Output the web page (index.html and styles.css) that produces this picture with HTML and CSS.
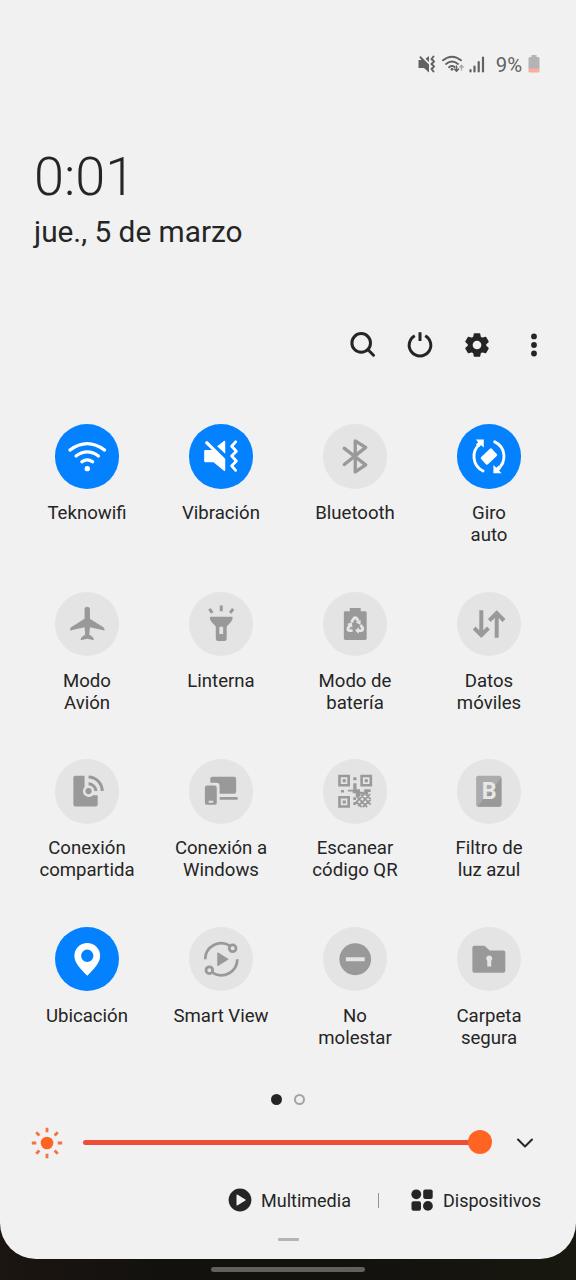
FILE: index.html
```html
<!DOCTYPE html>
<html lang="es">
<head>
<meta charset="utf-8">
<title>Ajustes rápidos</title>
<link rel="stylesheet" href="styles.css">
</head>
<body>
<main class="panel">
  <div class="status">
    <svg class="status-mute" width="18" height="18" viewBox="0 0 18 18"><path class="fill" d="M.5 5h3L1.300 2.300l1.200-1.200L11 9.500V17.500l-5-4.500H.5zM11 1v6L7.500 3.800z"/><path class="line" stroke-width="2" d="M15.500 1.500L13.500 4l2.500 2.500L13.500 9l2.500 2.500-2.500 2.500 2 2.500"/></svg>
    <svg class="status-wifi" width="23" height="18" viewBox="0 0 23 18"><path class="line" stroke-width="1.900" d="M1 5.300Q10-2 19 5.300M4 9Q10 4 16 9M7 12.200Q10 9.800 12.600 12"/><circle class="fill" cx="10" cy="14.300" r="1.400"/><path class="line" stroke-width="1.500" d="M14.500 11v5M12.500 14l2 2.200 2-2.200"/><path class="line faint" stroke-width="1.300" d="M19.500 15v-4.500M17.800 12.200l1.700-1.900 1.700 1.900"/></svg>
    <svg class="status-signal" width="16" height="17" viewBox="0 0 16 17"><path class="line" stroke-width="2.200" d="M1.500 14v1.500M5.500 10.500v5M9.700 6v9.500M14 1.500v14"/></svg>
    <span class="percent">9%</span>
    <svg class="status-battery" width="12" height="18" viewBox="0 0 12 18"><path fill="#b4b4b4" d="M3.500 0h5v2H10q1.500 0 1.500 1.500V14H.5V3.500Q.5 2 2 2h1.500z"/><path fill="#f7ae9b" d="M.5 13.500h11v3q0 1-1 1h-9q-1 0-1-1z"/></svg>
  </div>

  <header class="clock">
    <div class="time">0:01</div>
    <div class="date">jue., 5 de marzo</div>
  </header>

  <nav class="actions">
    <svg width="28" height="28" viewBox="0 0 28 28"><g class="line" stroke-width="3"><circle cx="12.200" cy="11.900" r="9.300"/><path d="M18.800 18.500l5.700 5.700"/></g></svg>
    <svg width="28" height="28" viewBox="0 0 28 28"><path class="line sharp" stroke-width="3" d="M8.800 4.700a10.800 10.800 0 1 0 10.400 0M14 1.300V10"/></svg>
    <svg width="28" height="28" viewBox="0 0 28 28"><path class="fill line" stroke-width="1.500" fill-rule="evenodd" d="M11.500 3h5l.7 3.300 2 1.200 3.300-1.100 2.500 4.200-2.500 2.300v2.200l2.500 2.300-2.500 4.200-3.300-1.100-2 1.200-.7 3.300h-5l-.7-3.300-2-1.200-3.300 1.100L3 17.400l2.500-2.300v-2.200L3 10.600l2.500-4.200 3.300 1.100 2-1.200zM14 8.900a5.100 5.100 0 1 0 0 10.200 5.100 5.100 0 0 0 0-10.200z"/></svg>
    <svg width="28" height="28" viewBox="0 0 28 28"><g class="fill"><circle cx="14" cy="5.400" r="2.900"/><circle cx="14" cy="14" r="2.900"/><circle cx="14" cy="22.500" r="2.900"/></g></svg>
  </nav>

  <section class="tiles">
    <div class="tile on"><svg class="disc" viewBox="0 0 65 65"><path class="line" stroke-width="3.200" d="M15 26.300Q32.500 13.500 50 26.300M21.200 32.300Q32.500 24 43.800 32.300M27 38.200Q32.500 34.300 38 38.200"/><circle class="fill" cx="32.500" cy="45" r="2.700"/></svg><span>Teknowifi</span></div>
    <div class="tile on"><svg class="disc" viewBox="0 0 65 65"><path class="fill" d="M16.500 26.300h6.700l-6.700-6.500q-.7-1.300.4-2.200t2.100 0L36.500 35v11.500q0 1.500-1.300.6L24.700 38.500h-8.200q-1.200 0-1.200-1.200v-9.800q0-1.200 1.200-1.200zM36.500 18v12L28.300 22.500l6.900-5.400q1.300-.7 1.300.9z"/><path class="line" stroke-width="2.900" d="M47 18l-4 4.500 4.700 4.900-4.700 4.900 4.700 4.900-4.700 5 4 4.500"/></svg><span>Vibración</span></div>
    <div class="tile"><svg class="disc" viewBox="0 0 65 65"><path class="line" stroke-width="3.400" d="M21.500 24.500L43 41.200 32.500 48.300V17L43 23.500 21.500 40.800"/></svg><span>Bluetooth</span></div>
    <div class="tile on"><svg class="disc" viewBox="0 0 65 65"><rect class="fill" x="24.700" y="27.800" width="15" height="10" rx="1.500" transform="rotate(-43 32.200 32.800)"/><path class="line" stroke-width="2.900" d="M26.300 47.300A16 16 0 0 1 23.500 20M38 18a16 16 0 0 1 2.600 27.600"/><path class="fill" d="M19 15.500h8v8.300l-2.900-2.700-2.400 2.200-2.600-2.600 2.200-2.300zM45 49.600h-8.300v-8.200l2.900 2.700 2.400-2.200 2.600 2.600-2.200 2.400z"/></svg><span>Giro<br>auto</span></div>

    <div class="tile"><svg class="disc" viewBox="0 0 65 65"><path class="fill" d="M29.800 17.800q0-2.900 2.700-2.900t2.700 2.900V27l13.600 8.500q1.200.8 1.200 3.200l-14.800-3.300-.6 7.500 3.300 2.500q1.300 1 1.300 3.100l-6.700-1.500-6.700 1.500q0-2.100 1.300-3.100l3.300-2.500-.6-7.500L15 38.700q0-2.400 1.200-3.200L29.800 27z"/></svg><span>Modo<br>Avión</span></div>
    <div class="tile"><svg class="disc" viewBox="0 0 65 65"><path class="fill" fill-rule="evenodd" d="M21.700 25h21.600q.7 0 .7.800 0 3.200-2 4.700l-4 4.300v12.400q0 2.300-2.300 2.300h-6.400q-2.300 0-2.300-2.300V34.800l-4-4.300q-2-1.500-2-4.700 0-.8.700-.8zM30.600 35v7.300h3.800V35z"/><path class="line sharp" stroke-width="3" d="M32.500 13.500v6M20.500 17l3 4M44.500 17l-3 4"/></svg><span>Linterna</span></div>
    <div class="tile"><svg class="disc" viewBox="0 0 65 65"><path class="fill" d="M27 16h11v3.300h4.500q1.500 0 1.500 1.500v26q0 1.500-1.500 1.500h-20q-1.500 0-1.500-1.500v-26q0-1.500 1.500-1.500H27z"/><g class="cutline" stroke-width="2.900"><path d="M28.700 30.400l2.200-3.600q1.500-1.700 3.100 0l1.500 2.500"/><path d="M38 33.200l2 3.200q.6 2.200-1.800 2.500h-3.400"/><path d="M29.800 38.900h-3q-2.500-.5-1.500-2.500l1.900-3"/></g><path class="cut" d="M33 30.500l5-2.300-.2 5zM36 35.400v6.700l-3.600-3.300zM24.200 32.200l4.800-1.600.7 5.100z"/></svg><span>Modo de<br>batería</span></div>
    <div class="tile"><svg class="disc" viewBox="0 0 65 65"><path class="line sharp" stroke-width="4" d="M24.500 18.500v25M17.300 36.300l7.200 7.200 7.200-7.200M40 46V21M32.600 28.700L40 21.300l7.400 7.400"/></svg><span>Datos<br>móviles</span></div>

    <div class="tile"><svg class="disc" viewBox="0 0 65 65"><path class="fill" d="M20.500 16.800h9.300v11.300A5.800 5.800 0 1 0 38.500 36.500h4.500v9.300q0 2-2 2H20.500q-2 0-2-2v-27q0-2 2-2z"/><circle class="fill" cx="33.800" cy="32.300" r="3.100"/><path class="line sharp" stroke-width="3" d="M33.800 25a7.500 7.500 0 0 1 7.400 7.300M33.800 18.200a14 14 0 0 1 13.800 14.100"/></svg><span>Conexión<br>compartida</span></div>
    <div class="tile"><svg class="disc" viewBox="0 0 65 65"><path class="fill" d="M21.500 24v-4q0-2 2-2h22q2 0 2 2v13q0 2-2 2H30.800v-8q0-3-3-3zM31 38.200h18V41H31z"/><path class="fill" fill-rule="evenodd" d="M18.200 26.800h7.600q2.200 0 2.200 2.200v15q0 2.200-2.200 2.200h-7.600Q16 46.200 16 44V29q0-2.200 2.200-2.200zm1.600 15.200v2h4.600v-2z"/></svg><span>Conexión a<br>Windows</span></div>
    <div class="tile"><svg class="disc" viewBox="0 0 65 65"><g class="line sharp" stroke-width="2.600"><path d="M16.600 17.100h9.300v9.300h-9.300zM38.900 17.100h9.300v9.300h-9.300zM16.600 38.600h9.300v9.300h-9.300z"/></g><path class="fill" d="M19.800 20.300H23v3.200h-3.200zM42 20.300h3.200v3.200H42zM19.800 41.700H23v3.200h-3.200zM30.500 18.500h3.300v3h-3.300zM30.500 24.500h3.300v6h3.500v2.500h4v2.500h-4v2.500H33v-3.500h-3v-1.800h-5V31h5.500zM18 31.200h3.200v2.600H18zM41.500 30.500H48v2.800h-2.500v2.500h-4zM30.500 38.500h2.800v2.700h-2.800zM30.500 43.700h2.800v2.700h-2.800z"/><path class="line sharp" stroke-width="1.800" d="M34 38l10.500 10.500M38 36l10 10M43 35.500l5 5M34 43.500l5 5M47.500 35.500l-12 12M42 35L32 45M48 41l-8 7.500"/></svg><span>Escanear<br>código QR</span></div>
    <div class="tile"><svg class="disc" viewBox="0 0 65 65"><rect x="19.300" y="17" width="25.500" height="31" rx="2.200" fill="#ababab"/><path class="fill" d="M44.800 19v26.800q0 2.200-2.200 2.200H20.500z"/><text class="filter-letter" x="32.500" y="40.500">B</text></svg><span>Filtro de<br>luz azul</span></div>

    <div class="tile on"><svg class="disc" viewBox="0 0 65 65"><path class="fill" fill-rule="evenodd" d="M32.500 16a13 13 0 0 1 13 13c0 7.500-7 14-13 20.200C26.500 43 19.500 36.500 19.500 29a13 13 0 0 1 13-13zm0 6.800a6.200 6.200 0 1 0 0 12.400 6.200 6.200 0 0 0 0-12.400z"/></svg><span>Ubicación</span></div>
    <div class="tile"><svg class="disc" viewBox="0 0 65 65"><g class="line sharp" stroke-width="2.800"><path d="M16.300 32.500A16.200 16.200 0 0 1 41 18.800M48.700 32.500A16.200 16.200 0 0 1 24 46.200"/><circle cx="44" cy="21.500" r="3.400"/><circle cx="20.500" cy="43.500" r="3.400"/></g><path class="fill" d="M28.500 26.500q0-1.300 1.200-.6l9.700 6q.8.600 0 1.200l-9.700 6q-1.200.7-1.200-.6z"/></svg><span>Smart View</span></div>
    <div class="tile"><svg class="disc" viewBox="0 0 65 65"><path class="fill" fill-rule="evenodd" d="M32.500 16.500a16 16 0 1 1 0 32 16 16 0 0 1 0-32zM23 30.400v4.200h19v-4.200z"/></svg><span>No<br>molestar</span></div>
    <div class="tile"><svg class="disc" viewBox="0 0 65 65"><path class="fill" fill-rule="evenodd" d="M17.500 19h10.200l5.300 4.700h13.700q2 0 2 2v18.500q0 2-2 2H17.500q-2 0-2-2V21q0-2 2-2zM32.500 28.800a3 3 0 0 0-2 5.300v5.600h4v-5.600a3 3 0 0 0-2-5.300z"/></svg><span>Carpeta<br>segura</span></div>
  </section>

  <div class="pages"><i class="dot current"></i><i class="dot"></i></div>

  <div class="brightness">
    <svg class="sun" width="32" height="32" viewBox="0 0 32 32"><circle cx="16" cy="16" r="6.300" fill="#ff6422"/><path fill="none" stroke="#f4743f" stroke-width="2.800" d="M16 .8v4.500M16 26.700v4.500M.8 16h4.500M26.700 16h4.500M5.200 5.200l3.200 3.200M23.600 23.600l3.200 3.200M26.800 5.200l-3.200 3.200M8.400 23.600l-3.200 3.200"/></svg>
    <div class="track"><i class="thumb"></i></div>
    <svg class="chevron" width="18" height="12" viewBox="0 0 18 12"><path class="line" stroke-width="2" d="M2 2.500l7 7 7-7"/></svg>
  </div>

  <footer class="links">
    <svg width="24" height="24" viewBox="0 0 24 24"><path class="fill" fill-rule="evenodd" d="M12 .6a11.400 11.400 0 1 1 0 22.800A11.400 11.400 0 0 1 12 .6zM8.500 7.300v9.400q0 1.300 1.200.6l7.700-4.700q.9-.6 0-1.200L9.700 6.700q-1.200-.7-1.200.6z"/></svg>
    <span class="media">Multimedia</span>
    <i class="divider"></i>
    <svg width="24" height="24" viewBox="0 0 24 24"><g class="fill"><circle cx="6.300" cy="6.300" r="4.900"/><circle cx="17.900" cy="17.900" r="4.900"/><rect x="13.200" y="1.500" width="9.500" height="9.500" rx="2"/><rect x="1.500" y="13.200" width="9.500" height="9.500" rx="2"/></g></svg>
    <span class="devices">Dispositivos</span>
  </footer>
  <div class="grip"></div>
</main>
<div class="home"></div>
</body>
</html>
```
FILE: styles.css
```css
* { box-sizing: border-box; }
body {
  margin: 0;
  height: 1280px;
  overflow: hidden;
  background: linear-gradient(90deg, #1c1511, #12110e 30%, #12110e 60%, #18180f);
  color: #252525;
  font-family: Roboto, "Liberation Sans", sans-serif;
}
svg { display: block; flex: none; overflow: visible; }
.fill { fill: currentColor; }
.line { fill: none; stroke: currentColor; stroke-linecap: round; stroke-linejoin: round; }
.fill.line { fill: currentColor; }
.sharp { stroke-linecap: butt; stroke-linejoin: miter; }
.faint { opacity: .5; }
.panel {
  height: 1259px;
  background: #f1f1f1;
  border-radius: 0 0 36px 36px;
  display: flex;
  flex-direction: column;
}
.status {
  height: 96px;
  padding: 32px 36px 0 0;
  display: flex;
  justify-content: flex-end;
  align-items: center;
  color: #626262;
}
.status-mute { margin-right: 6px; }
.status-wifi { margin-right: 4px; }
.status-signal { margin-right: 11px; }
.percent { font-size: 20.300px; line-height: 24px; margin: 2px 6px 0 0; }
.clock { height: 222px; padding: 49px 0 0 34px; }
.time { font-size: 54px; font-weight: 300; line-height: 64px; }
.date { font-size: 29.800px; line-height: 34px; margin-top: 6px; }
.actions {
  height: 54px;
  padding-right: 28px;
  display: flex;
  justify-content: flex-end;
  align-items: center;
  gap: 29px;
}
.tiles {
  margin: 52px 20px 0;
  display: grid;
  grid-template-columns: repeat(4, 134px);
  grid-auto-rows: 167.500px;
  height: 670px;
}
.tile {
  display: flex;
  flex-direction: column;
  align-items: center;
  text-align: center;
  font-size: 18.600px;
  line-height: 22px;
}
.tile span { margin-top: 13.500px; white-space: nowrap; }
.disc {
  width: 64.500px;
  height: 64.500px;
  border-radius: 50%;
  background: #e4e4e4;
  color: #999;
}
.on .disc { background: #0381fe; color: #fff; }
.cut { fill: #e4e4e4; }
.cutline { fill: none; stroke: #e4e4e4; }
.filter-letter { fill: #e8e8e8; font-size: 23.500px; font-weight: 700; text-anchor: middle; }
.pages { display: flex; justify-content: center; gap: 12px; height: 12px; }
.dot { width: 11px; height: 11px; border: 2px solid #a3a3a3; border-radius: 50%; }
.current { background: #252525; border-color: #252525; }
.brightness {
  display: flex;
  align-items: center;
  height: 32px;
  margin-top: 21px;
  padding-left: 31px;
}
.track { position: relative; width: 397px; height: 5px; margin: -2px 0 0 20px; border-radius: 3px; background: #ed4e38; }
.thumb { position: absolute; right: -12px; top: -9.500px; width: 24px; height: 24px; border-radius: 50%; background: #ff6422; }
.chevron { margin-left: 36px; }
.links {
  display: flex;
  align-items: center;
  height: 24px;
  margin-top: 29px;
  padding-left: 228px;
  font-size: 18px;
}
.links span { margin-left: 9px; white-space: nowrap; }
.media { width: 91px; }
.divider { width: 1px; height: 15px; margin: 0 31px 0 26px; background: #929292; }
.grip { width: 21px; height: 3px; margin: 26px auto 0; background: #b4b4b4; border-radius: 1px; }
.home { width: 154px; height: 5px; margin: 8px auto 0; border-radius: 3px; background: #62605e; }
```
